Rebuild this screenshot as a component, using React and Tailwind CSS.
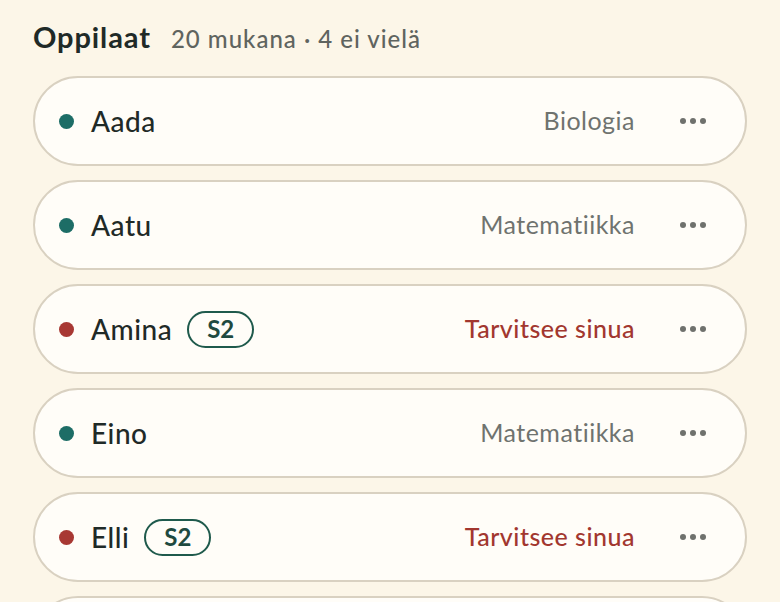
import React from "react";

const rows = [
  { name: "Aada", dot: "bg-[#1d6d66]", right: "Biologia", need: false },
  { name: "Aatu", dot: "bg-[#1d6d66]", right: "Matematiikka", need: false },
  { name: "Amina", dot: "bg-[#a83833]", right: "Tarvitsee sinua", need: true, badge: "S2" },
  { name: "Eino", dot: "bg-[#1d6d66]", right: "Matematiikka", need: false },
  { name: "Elli", dot: "bg-[#a83833]", right: "Tarvitsee sinua", need: true, badge: "S2" },
];

function Dots() {
  return (
    <svg width="28" height="8" viewBox="0 0 28 8" className="text-[#6f716d]">
      <circle cx="4" cy="4" r="3" fill="currentColor" />
      <circle cx="14" cy="4" r="3" fill="currentColor" />
      <circle cx="24" cy="4" r="3" fill="currentColor" />
    </svg>
  );
}

export default function App() {
  return (
    <div className="h-[602px] overflow-hidden bg-[#fcf6e8] px-[33px] pt-[15px] font-['Lato',sans-serif]">
      <div className="flex items-baseline gap-[20px] h-[40px]">
        <span className="text-[29px] font-bold text-[#1f2a27] tracking-[0.9px]">Oppilaat</span>
        <span className="text-[24px] font-medium text-[#5f645f] tracking-[1px]">20 mukana · 4 ei vielä</span>
      </div>
      <div className="mt-[21px] flex flex-col gap-[14px]">
        {rows.map((r, i) => (
          <div
            key={i}
            className="h-[90px] shrink-0 rounded-[45px] border-2 border-[#d9d1c1] bg-[#fffdf8] flex items-center pl-[24px] pr-[38px]"
          >
            <span className={`w-[15px] h-[15px] rounded-full ${r.dot}`} />
            <span className="ml-[17px] text-[28px] font-medium text-[#1f2a27] tracking-[0.5px]">{r.name}</span>
            {r.badge && (
              <span className="ml-[15px] h-[37px] px-[18px] rounded-full border-2 border-[#1f5a4c] text-[#1f4a40] text-[24px] font-bold flex items-center leading-none">
                {r.badge}
              </span>
            )}
            <span
              className={`ml-auto text-[25px] tracking-[0.5px] ${
                r.need ? "text-[#a2372f] font-medium" : "text-[#6f736f]"
              }`}
            >
              {r.right}
            </span>
            <span className="ml-[44px] flex items-center">
              <Dots />
            </span>
          </div>
        ))}
        <div className="h-[90px] shrink-0 rounded-[45px] border-2 border-[#d9d1c1] bg-[#fffdf8]" />
      </div>
    </div>
  );
}
